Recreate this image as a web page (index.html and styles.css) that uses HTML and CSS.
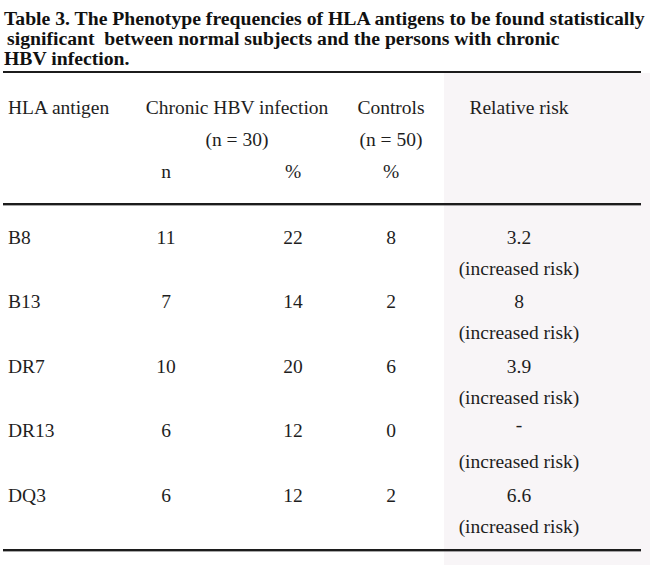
FILE: index.html
```html
<!DOCTYPE html>
<html lang="en">
<head>
<meta charset="utf-8">
<title>Table 3</title>
<link rel="stylesheet" href="styles.css">
</head>
<body>
<div class="page">
  <div class="caption">
    <div class="cap-line">Table 3. The Phenotype frequencies of HLA antigens to be found statistically</div>
    <div class="cap-line indent">significant&nbsp; between normal subjects and the persons with chronic</div>
    <div class="cap-line">HBV infection.</div>
  </div>
  <div class="rule"></div>
  <div class="table">
    <div class="grid head">
      <div class="c1">HLA antigen</div>
      <div class="span23">Chronic HBV infection</div>
      <div class="c4">Controls</div>
      <div class="c5">Relative risk</div>
      <div class="c1"></div>
      <div class="span23">(n = 30)</div>
      <div class="c4">(n = 50)</div>
      <div class="c5"></div>
      <div class="c1"></div>
      <div class="c2">n</div>
      <div class="c3">%</div>
      <div class="c4">%</div>
      <div class="c5"></div>
    </div>
    <div class="rule"></div>
    <div class="grid body-rows">
      <div class="c1">B8</div><div class="c2">11</div><div class="c3">22</div><div class="c4">8</div>
      <div class="c5">3.2<br>(increased risk)</div>
      <div class="c1">B13</div><div class="c2">7</div><div class="c3">14</div><div class="c4">2</div>
      <div class="c5">8<br>(increased risk)</div>
      <div class="c1">DR7</div><div class="c2">10</div><div class="c3">20</div><div class="c4">6</div>
      <div class="c5">3.9<br>(increased risk)</div>
      <div class="c1">DR13</div><div class="c2">6</div><div class="c3">12</div><div class="c4">0</div>
      <div class="c5"><span class="dash">-</span><br>(increased risk)</div>
      <div class="c1">DQ3</div><div class="c2">6</div><div class="c3">12</div><div class="c4">2</div>
      <div class="c5">6.6<br>(increased risk)</div>
    </div>
    <div class="rule"></div>
  </div>
</div>
</body>
</html>
```

FILE: styles.css
```css
html, body {
  margin: 0;
  padding: 0;
  background: #ffffff;
}

.page {
  width: 650px;
  height: 565px;
  box-sizing: border-box;
  padding-top: 8px;
  background: #ffffff;
  font-family: "Liberation Serif", "Times New Roman", serif;
  color: #1e1e1e;
  overflow: hidden;
}

.caption {
  padding-left: 4px;
  font-weight: bold;
  font-size: 19.7px;
  line-height: 20px;
  color: #111111;
  white-space: nowrap;
}

.cap-line.indent {
  padding-left: 3px;
}

.rule {
  margin: 0 9px 0 3px;
  height: 2px;
  background: #1c1c1c;
  box-shadow: 0 1px 0 rgba(60, 60, 60, 0.45);
}

.caption + .rule {
  margin-top: 3px;
}

.table {
  min-height: 500px;
  background: linear-gradient(to right, #ffffff 0, #ffffff 444px, #f8f5f7 444px, #f8f5f7 100%);
}

.grid {
  display: grid;
  grid-template-columns: 126px 80px 134px 102px 154px;
  font-size: 19.5px;
  white-space: nowrap;
}

.head {
  padding: 19px 0 15px;
  line-height: 32px;
}

.body-rows {
  padding: 16.5px 0 7.5px;
  line-height: 31px;
  row-gap: 2.5px;
}

.c1 {
  padding-left: 8px;
  text-align: left;
}

.c2, .c4, .c5, .span23 {
  text-align: center;
}

.c3 {
  padding-left: 40px;
  text-align: center;
}

.span23 {
  grid-column: 2 / span 2;
  padding-left: 8px;
}

.dash {
  position: relative;
  top: -6px;
}
```
